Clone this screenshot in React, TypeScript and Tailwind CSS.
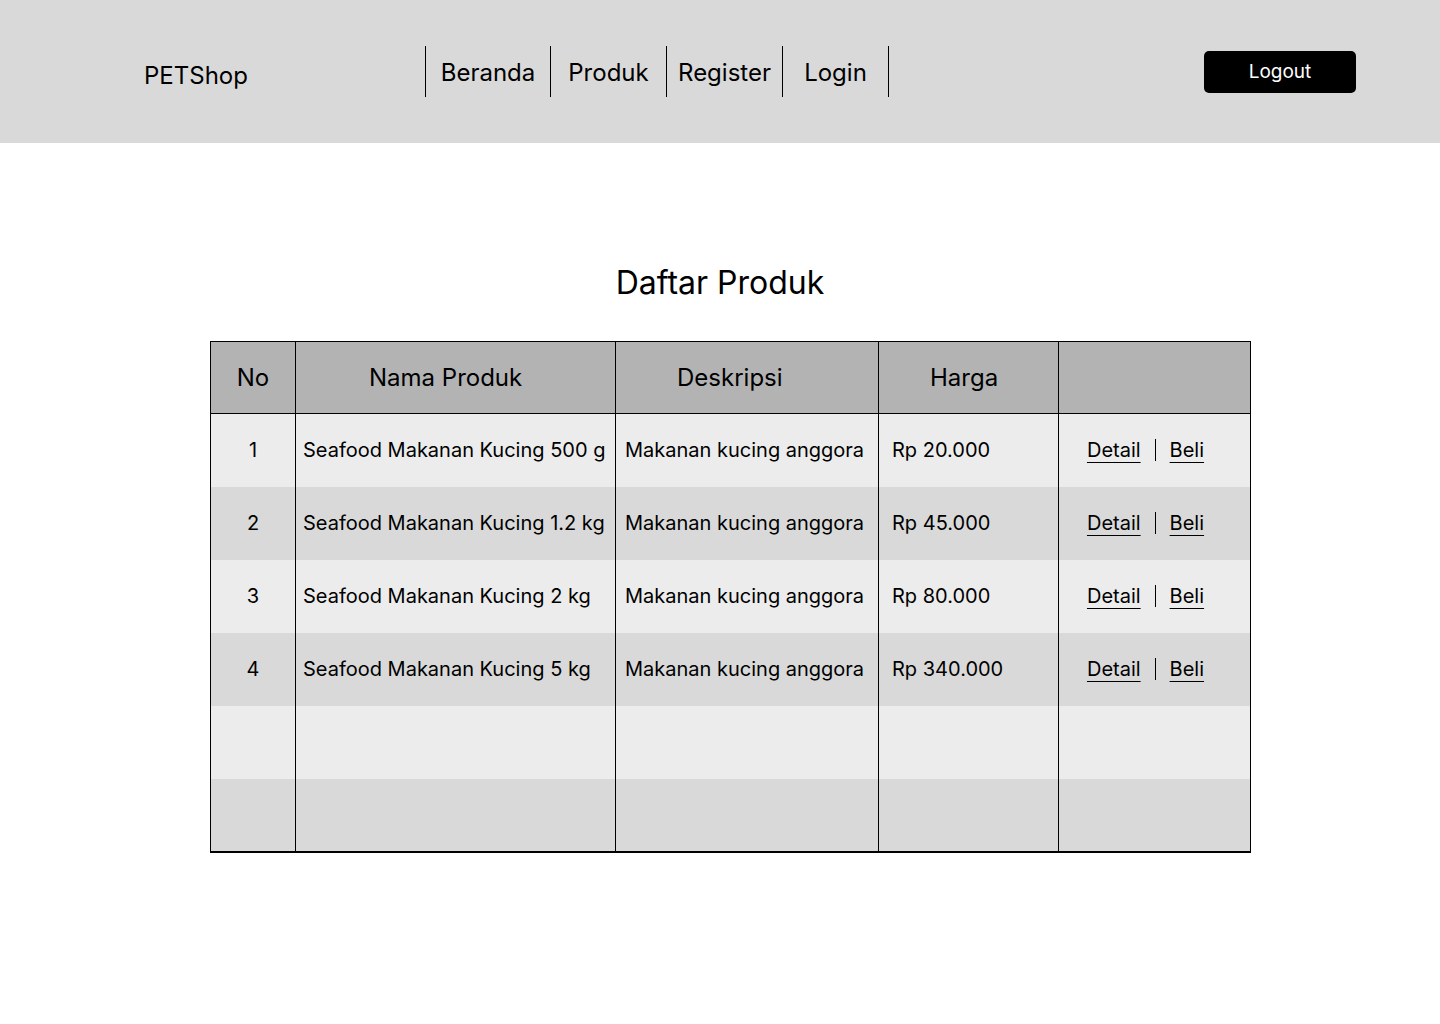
import React from "react";

interface Produk {
  no: number;
  nama: string;
  deskripsi: string;
  harga: string;
}

const produk: Produk[] = [
  { no: 1, nama: "Seafood Makanan Kucing 500 g", deskripsi: "Makanan kucing anggora", harga: "Rp 20.000" },
  { no: 2, nama: "Seafood Makanan Kucing 1.2 kg", deskripsi: "Makanan kucing anggora", harga: "Rp 45.000" },
  { no: 3, nama: "Seafood Makanan Kucing 2 kg", deskripsi: "Makanan kucing anggora", harga: "Rp 80.000" },
  { no: 4, nama: "Seafood Makanan Kucing 5 kg", deskripsi: "Makanan kucing anggora", harga: "Rp 340.000" },
];

const menu = [
  { label: "Beranda", w: "w-[125px]" },
  { label: "Produk", w: "w-[116px]" },
  { label: "Register", w: "w-[116px]" },
  { label: "Login", w: "w-[106px]" },
];

export default function App() {
  return (
    <div className="min-h-screen bg-white text-black font-['Inter','Noto_Sans',sans-serif]">
      {/* header */}
      <div className="flex items-center h-[143px] bg-[#d9d9d9] pl-[144px] pr-[84px]">
        <div className="w-[281px] text-[24px] mt-[9px]">PETShop</div>

        <div className="flex h-[51px] mt-[-1px] border-r border-black">
          {menu.map((m) => (
            <div
              key={m.label}
              className={`${m.w} flex items-center justify-center pt-[4px] border-l border-black text-[24px]`}
            >
              {m.label}
            </div>
          ))}
        </div>

        <button className="ml-auto w-[152px] h-[42px] rounded-[5px] bg-black text-white text-[19px] mt-[1px]">
          Logout
        </button>
      </div>

      <div className="flex flex-col items-center">
        <h1 className="mt-[120px] text-[32px] leading-[40px]">Daftar Produk</h1>
      </div>

      <div className="pl-[210px] pt-[38px]">
        <table className="w-[1040px] border-collapse border border-black border-b-2 table-fixed">
          <colgroup>
            <col className="w-[85px]" />
            <col className="w-[320px]" />
            <col className="w-[263px]" />
            <col className="w-[180px]" />
            <col className="w-[192px]" />
          </colgroup>
          <thead>
            <tr className="h-[72px] bg-[#b3b3b3] text-[24px] border-b border-black">
              <th className="font-normal text-center border-r border-black">No</th>
              <th className="font-normal text-left pl-[73px] border-r border-black">Nama Produk</th>
              <th className="font-normal text-left pl-[61px] border-r border-black">Deskripsi</th>
              <th className="font-normal text-left pl-[51px] border-r border-black">Harga</th>
              <th className="font-normal"></th>
            </tr>
          </thead>
          <tbody className="text-[20px]">
            {produk.map((p, i) => (
              <tr key={p.no} className={`h-[73px] ${i % 2 === 0 ? "bg-[#ececec]" : "bg-[#d9d9d9]"}`}>
                <td className="text-center border-r border-black">{p.no}</td>
                <td className="pl-[7px] border-r border-black whitespace-nowrap">{p.nama}</td>
                <td className="pl-[9px] border-r border-black whitespace-nowrap">{p.deskripsi}</td>
                <td className="pl-[13px] border-r border-black">{p.harga}</td>
                <td className="pr-[18px]">
                  <div className="flex items-center justify-center">
                    <span className="underline underline-offset-[5px] decoration-1">Detail</span>
                    <span className="mx-[14px] w-px h-[22px] bg-black"></span>
                    <span className="underline underline-offset-[5px] decoration-1">Beli</span>
                  </div>
                </td>
              </tr>
            ))}
            <tr className="h-[73px] bg-[#ececec]">
              <td className="border-r border-black"></td>
              <td className="border-r border-black"></td>
              <td className="border-r border-black"></td>
              <td className="border-r border-black"></td>
              <td></td>
            </tr>
            <tr className="h-[73px] bg-[#d9d9d9]">
              <td className="border-r border-black"></td>
              <td className="border-r border-black"></td>
              <td className="border-r border-black"></td>
              <td className="border-r border-black"></td>
              <td></td>
            </tr>
          </tbody>
        </table>
      </div>
    </div>
  );
}
